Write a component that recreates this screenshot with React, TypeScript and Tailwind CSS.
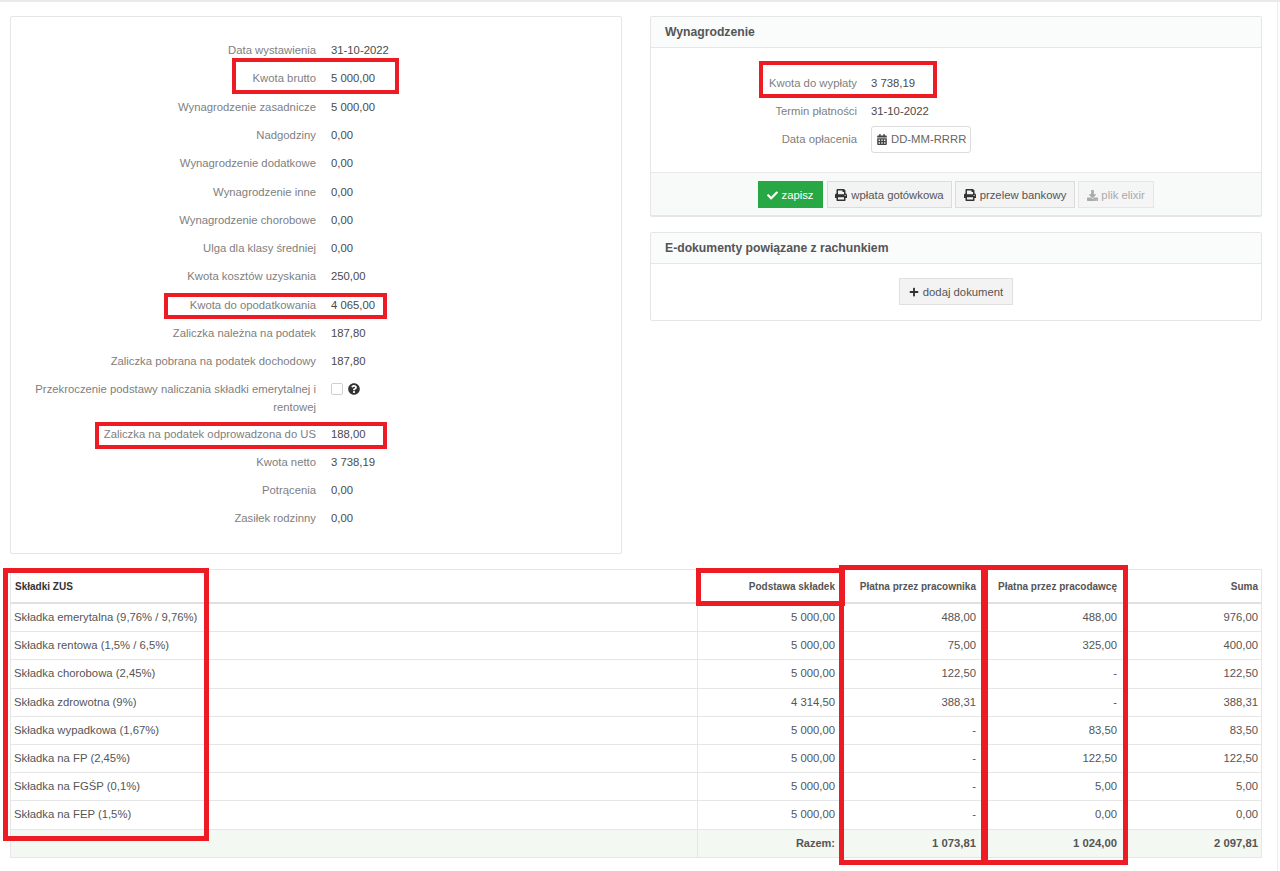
import React from "react";
import { FaCalendarAlt, FaCheck, FaDownload, FaPlus, FaPrint, FaQuestionCircle } from "react-icons/fa";

const topRows = [
  ["Data wystawienia", "31-10-2022"],
  ["Kwota brutto", "5 000,00"],
  ["Wynagrodzenie zasadnicze", "5 000,00"],
  ["Nadgodziny", "0,00"],
  ["Wynagrodzenie dodatkowe", "0,00"],
  ["Wynagrodzenie inne", "0,00"],
  ["Wynagrodzenie chorobowe", "0,00"],
  ["Ulga dla klasy średniej", "0,00"],
  ["Kwota kosztów uzyskania", "250,00"],
  ["Kwota do opodatkowania", "4 065,00"],
  ["Zaliczka należna na podatek", "187,80"],
  ["Zaliczka pobrana na podatek dochodowy", "187,80"],
];

const bottomRows = [
  ["Zaliczka na podatek odprowadzona do US", "188,00"],
  ["Kwota netto", "3 738,19"],
  ["Potrącenia", "0,00"],
  ["Zasiłek rodzinny", "0,00"],
];

const zusRows = [
  ["Składka emerytalna (9,76% / 9,76%)", "5 000,00", "488,00", "488,00", "976,00"],
  ["Składka rentowa (1,5% / 6,5%)", "5 000,00", "75,00", "325,00", "400,00"],
  ["Składka chorobowa (2,45%)", "5 000,00", "122,50", "-", "122,50"],
  ["Składka zdrowotna (9%)", "4 314,50", "388,31", "-", "388,31"],
  ["Składka wypadkowa (1,67%)", "5 000,00", "-", "83,50", "83,50"],
  ["Składka na FP (2,45%)", "5 000,00", "-", "122,50", "122,50"],
  ["Składka na FGŚP (0,1%)", "5 000,00", "-", "5,00", "5,00"],
  ["Składka na FEP (1,5%)", "5 000,00", "-", "0,00", "0,00"],
];

function InfoRow({ label, value }: { label: string; value: string }) {
  return (
    <div className="flex h-[28.3px] items-center">
      <div className="w-[285px] text-right text-[#808080]">{label}</div>
      <div className="ml-[15px] text-[#4a4a4a]">{value}</div>
    </div>
  );
}

function PayRow({ label, children }: { label: string; children: React.ReactNode }) {
  return (
    <div className="flex h-[28.3px] items-center">
      <div className="w-[206px] text-right text-[#808080]">{label}</div>
      <div className="ml-[14px] text-[#4a4a4a]">{children}</div>
    </div>
  );
}

export default function App() {
  return (
    <div className="relative h-[871px] w-[1280px] overflow-hidden bg-white font-['Liberation_Sans',Arial,sans-serif] text-[11.3px] leading-[17px]">
      <div className="h-[2px] w-full bg-[#e9e9e9]"></div>
      <div className="pl-[10px] pt-[14px]">
        <div className="flex items-start gap-[28px]">
          {/* Left card */}
          <div className="h-[538px] w-[612px] rounded-[2px] border border-[#e6e6e6] pl-[20px] pt-[19.4px]">
            {topRows.map(([label, value]) => (
              <InfoRow key={label} label={label} value={value} />
            ))}
            <div className="flex h-[44px] items-start pt-[3.6px]">
              <div className="w-[285px] text-right leading-[18px] text-[#808080]">
                Przekroczenie podstawy naliczania składki emerytalnej i rentowej
              </div>
              <div className="ml-[15px] flex h-[18px] items-center gap-[5px]">
                <span className="h-[12px] w-[12px] rounded-[2px] border border-[#cfcfcf] bg-white"></span>
                <FaQuestionCircle className="h-[12px] w-[12px] text-[#333]" />
              </div>
            </div>
            {bottomRows.map(([label, value]) => (
              <InfoRow key={label} label={label} value={value} />
            ))}
          </div>

          {/* Right column */}
          <div className="flex w-[612px] flex-col gap-[15px]">
            <div className="h-[201px] rounded-[2px] border border-b-[2px] border-[#e6e6e6]">
              <div className="flex h-[31px] items-center border-b border-[#e6e6e6] bg-[#fafbfb] pl-[14px] text-[12.2px] font-bold text-[#555]">
                Wynagrodzenie
              </div>
              <div className="h-[124px] pt-[21px]">
                <PayRow label="Kwota do wypłaty">3 738,19</PayRow>
                <PayRow label="Termin płatności">31-10-2022</PayRow>
                <PayRow label="Data opłacenia">
                  <div className="flex h-[27px] w-[100px] items-center gap-[4px] rounded-[3px] border border-[#dcdcdc] pl-[5px] text-[#666]">
                    <FaCalendarAlt className="h-[11px] w-[10px] text-[#444]" />
                    <span>DD-MM-RRRR</span>
                  </div>
                </PayRow>
              </div>
              <div className="flex h-[43px] items-start gap-[3px] border-t border-[#e9e9e9] bg-[#f8f9f9] pl-[107px] pt-[8px]">
                <button className="mr-[1px] flex h-[27px] w-[65px] items-center justify-center gap-[3px] bg-[#28a745] pt-[1px] text-white">
                  <FaCheck className="h-[11px] w-[11px]" />
                  zapisz
                </button>
                <button className="flex h-[27px] w-[125px] items-center justify-center gap-[4px] border border-[#dcdcdc] bg-[#f3f3f3] pt-[1px] text-[#555]">
                  <FaPrint className="h-[12px] w-[12px] text-[#333]" />
                  wpłata gotówkowa
                </button>
                <button className="flex h-[27px] w-[120px] items-center justify-center gap-[4px] border border-[#dcdcdc] bg-[#f3f3f3] pt-[1px] text-[#555]">
                  <FaPrint className="h-[12px] w-[12px] text-[#333]" />
                  przelew bankowy
                </button>
                <button className="flex h-[27px] w-[76px] items-center justify-center gap-[3px] border border-[#e6e6e6] bg-[#f5f5f5] pt-[1px] text-[#aaa]">
                  <FaDownload className="h-[11px] w-[11px]" />
                  plik elixir
                </button>
              </div>
            </div>

            <div className="h-[89px] rounded-[2px] border border-[#e6e6e6]">
              <div className="flex h-[31px] items-center border-b border-[#e6e6e6] bg-[#fafbfb] pl-[14px] text-[12.2px] font-bold text-[#555]">
                E-dokumenty powiązane z rachunkiem
              </div>
              <div className="flex justify-center pt-[14px]">
                <button className="flex h-[27px] w-[114px] items-center justify-center gap-[4px] border border-[#e0e0e0] bg-[#f3f3f3] pt-[1px] text-[#555]">
                  <FaPlus className="h-[10px] w-[10px] text-[#333]" />
                  dodaj dokument
                </button>
              </div>
            </div>
          </div>
        </div>

        {/* ZUS table */}
        <div className="mt-[15px] w-[1252px] border border-[#e6e6e6]">
          <div className="flex h-[34px] items-center border-b-[2px] border-[#e0e0e0] text-[10px] font-bold text-[#555]">
            <div className="w-[686px] pl-[4px] text-[#333]">Składki ZUS</div>
            <div className="w-[141px] pr-[3px] text-right">Podstawa składek</div>
            <div className="w-[141px] pr-[3px] text-right">Płatna przez pracownika</div>
            <div className="w-[141px] pr-[3px] text-right">Płatna przez pracodawcę</div>
            <div className="w-[141px] pr-[3px] text-right">Suma</div>
          </div>
          {zusRows.map((row) => (
            <div key={row[0]} className="flex h-[28.2px] items-center border-b border-[#e6e6e6] text-[#555]">
              <div className="w-[686px] pl-[3px]">{row[0]}</div>
              <div className="flex h-full w-[141px] items-center justify-end border-l border-[#e6e6e6] pr-[3px]">{row[1]}</div>
              <div className="w-[141px] pr-[3px] text-right">{row[2]}</div>
              <div className="w-[141px] pr-[3px] text-right">{row[3]}</div>
              <div className="w-[141px] pr-[3px] text-right">{row[4]}</div>
            </div>
          ))}
          <div className="flex h-[27px] items-center bg-[#f4f8f2] font-bold text-[#555]">
            <div className="h-full w-[686px]"></div>
            <div className="flex h-full w-[141px] items-center justify-end border-l border-[#e6e6e6] pr-[3px] text-[11px]">Razem:</div>
            <div className="w-[141px] pr-[3px] text-right">1 073,81</div>
            <div className="w-[141px] pr-[3px] text-right">1 024,00</div>
            <div className="w-[141px] pr-[3px] text-right">2 097,81</div>
          </div>
        </div>
      </div>

      {/* Right edge line of the page */}
      <div className="absolute right-[2px] top-0 h-[871px] w-[1px] bg-[#ececec]"></div>

      {/* Red annotation frames drawn over the page */}
      <div className="absolute left-[232px] top-[58px] h-[36px] w-[167px] border-4 border-[#ed1c24]"></div>
      <div className="absolute left-[164px] top-[293px] h-[26px] w-[223px] border-4 border-[#ed1c24]"></div>
      <div className="absolute left-[95px] top-[422px] h-[27px] w-[292px] border-4 border-[#ed1c24]"></div>
      <div className="absolute left-[759px] top-[61px] h-[37px] w-[178px] border-4 border-[#ed1c24]"></div>
      <div className="absolute left-[3px] top-[568px] h-[273px] w-[206px] border-[5px] border-[#ed1c24]"></div>
      <div className="absolute left-[696px] top-[568px] h-[38px] w-[149px] border-[5px] border-[#ed1c24]"></div>
      <div className="absolute left-[839px] top-[565px] h-[300px] w-[147px] border-[5px] border-[#ed1c24]"></div>
      <div className="absolute left-[983px] top-[565px] h-[300px] w-[145px] border-[5px] border-[#ed1c24]"></div>
    </div>
  );
}
